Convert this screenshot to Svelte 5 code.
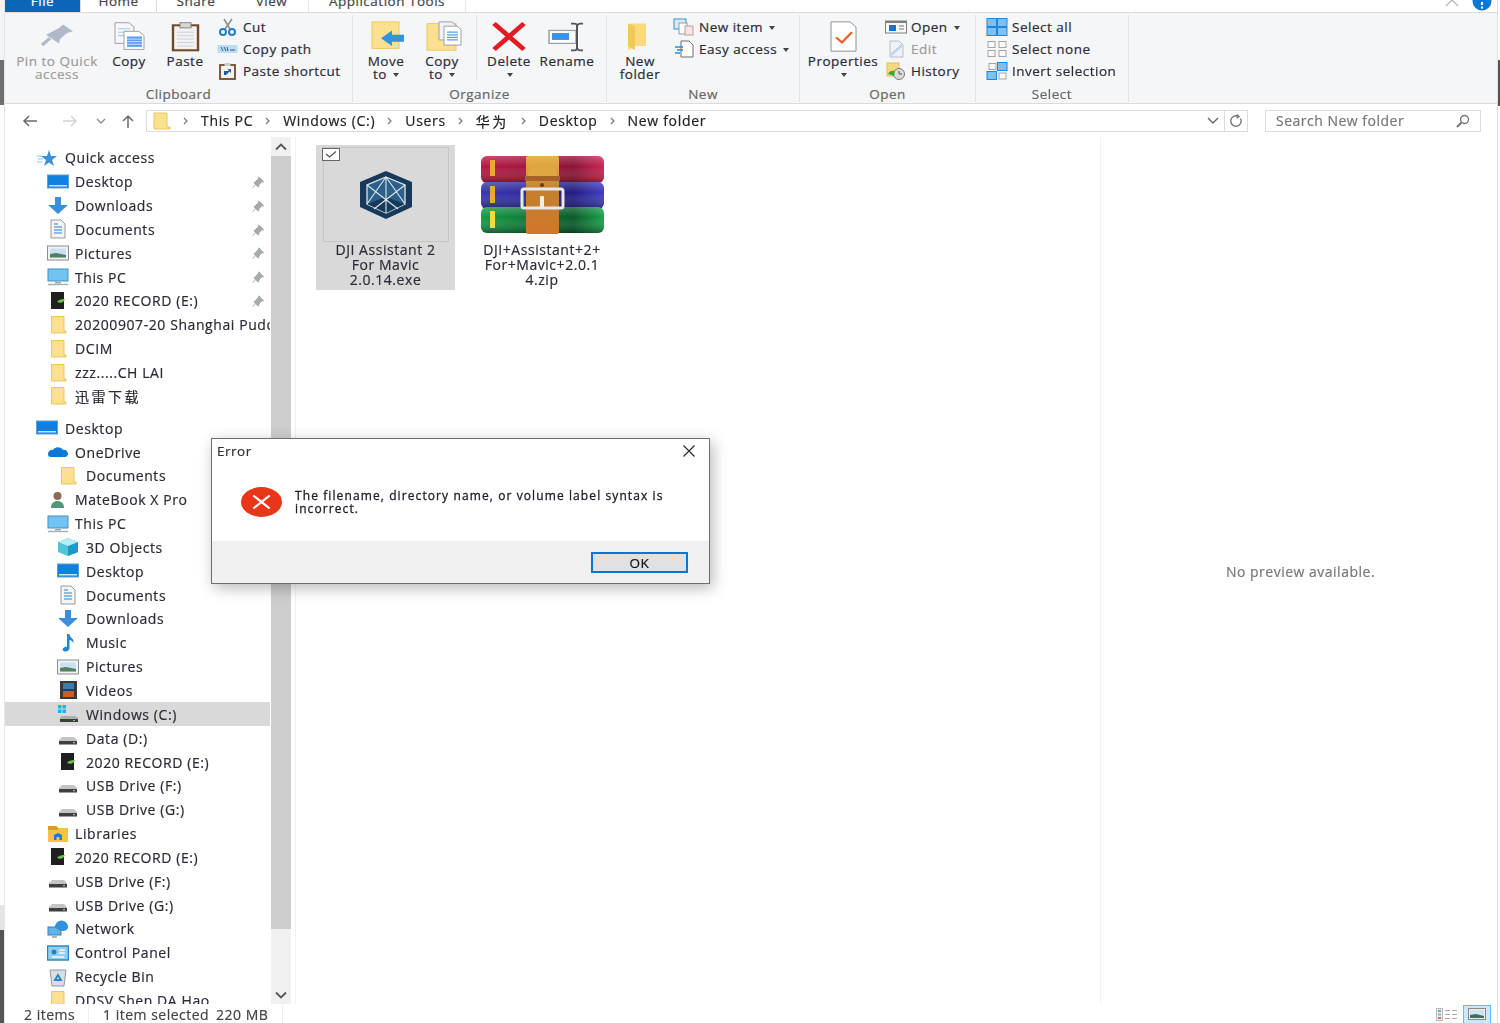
<script>
  const top = [
    { t: 'Quick access', ic: 'star', l: 'l0' },
    { t: 'Desktop', ic: 'desk', l: 'l1', pin: true },
    { t: 'Downloads', ic: 'down', l: 'l1', pin: true },
    { t: 'Documents', ic: 'docs', l: 'l1', pin: true },
    { t: 'Pictures', ic: 'pics', l: 'l1', pin: true },
    { t: 'This PC', ic: 'pc', l: 'l1', pin: true },
    { t: '2020 RECORD (E:)', ic: 'rec', l: 'l1', pin: true },
    { t: '20200907-20 Shanghai Pudong', ic: 'folder', l: 'l1' },
    { t: 'DCIM', ic: 'folder', l: 'l1' },
    { t: 'zzz.....CH LAI', ic: 'folder', l: 'l1' },
    { t: '迅雷下载', ic: 'folder', l: 'l1', cjk: true }
  ];
  const rest = [
    { t: 'Desktop', ic: 'desk', l: 'l0' },
    { t: 'OneDrive', ic: 'cloud', l: 'l1' },
    { t: 'Documents', ic: 'folder', l: 'l2' },
    { t: 'MateBook X Pro', ic: 'user', l: 'l1' },
    { t: 'This PC', ic: 'pc', l: 'l1' },
    { t: '3D Objects', ic: 'cube', l: 'l2' },
    { t: 'Desktop', ic: 'desk', l: 'l2' },
    { t: 'Documents', ic: 'docs', l: 'l2' },
    { t: 'Downloads', ic: 'down', l: 'l2' },
    { t: 'Music', ic: 'music', l: 'l2' },
    { t: 'Pictures', ic: 'pics', l: 'l2' },
    { t: 'Videos', ic: 'video', l: 'l2' },
    { t: 'Windows (C:)', ic: 'win', l: 'l2', sel: true },
    { t: 'Data (D:)', ic: 'drive', l: 'l2' },
    { t: '2020 RECORD (E:)', ic: 'rec', l: 'l2' },
    { t: 'USB Drive (F:)', ic: 'drive', l: 'l2' },
    { t: 'USB Drive (G:)', ic: 'drive', l: 'l2' },
    { t: 'Libraries', ic: 'lib', l: 'l1' },
    { t: '2020 RECORD (E:)', ic: 'rec', l: 'l1' },
    { t: 'USB Drive (F:)', ic: 'drive', l: 'l1' },
    { t: 'USB Drive (G:)', ic: 'drive', l: 'l1' },
    { t: 'Network', ic: 'net', l: 'l1' },
    { t: 'Control Panel', ic: 'panel', l: 'l1' },
    { t: 'Recycle Bin', ic: 'bin', l: 'l1' },
    { t: 'DDSV Shen DA Hao', ic: 'folder', l: 'l1' }
  ];
  const crumbs = ['This PC', 'Windows (C:)', 'Users', '华为', 'Desktop', 'New folder'];
</script>

{#snippet pinIcon(color)}
  <svg class="pin" viewBox="0 0 16 16"><path d="M9 1 L15 7 L12.5 7.5 L9 11 L9 13.5 L7.5 13 L3 8.5 L4.5 7 L8 4 Z M5 10.5 L1.5 14.5" fill={color} stroke={color} stroke-width="1.2"/></svg>
{/snippet}

{#snippet tree(n)}
  <svg class="ti" viewBox="0 0 22 20">
    {#if n === 'star'}
      <path d="M13 2 L15 8 L21 8 L16 12 L18 18 L13 14.5 L8 18 L10 12 L5 8 L11 8 Z" fill="#3a8fdc"/><path d="M1 8h5M2 11h5M1 14h5" stroke="#8cc4f0" stroke-width="1"/>
    {:else if n === 'desk'}
      <rect x="0.5" y="3" width="21" height="13" fill="#0f80e0" stroke="#5f9fd0"/><rect x="2" y="13" width="18" height="1.5" fill="#c7e4f9"/>
    {:else if n === 'down'}
      <path d="M8 1h6v8h7l-10 9L1 9h7z" fill="#3c8fdc"/>
    {:else if n === 'docs'}
      <path d="M4 1h10l4 4v14H4z" fill="#f4f4f4" stroke="#9a9a9a"/><path d="M7 5h4M7 8h8M7 11h8M7 14h8" stroke="#6ca6de" stroke-width="1.3"/>
    {:else if n === 'pics'}
      <rect x="0.5" y="3" width="21" height="14" fill="#f2f2f2" stroke="#8e8e8e"/><rect x="3" y="5.5" width="16" height="9" fill="#c9e1f2"/><path d="M3 11l6-1 10 2v2.5H3z" fill="#527f5f"/>
    {:else if n === 'pc'}
      <rect x="1" y="2" width="20" height="12" fill="#6fc4f2" stroke="#4a8fbe"/><path d="M8 15h6v1.5H8z" fill="#9aa7b0"/><path d="M1 17.5h20" stroke="#9fb0bb" stroke-width="1.4"/>
    {:else if n === 'rec'}
      <rect x="4" y="1" width="13" height="17" fill="#1f1f1f"/><path d="M10 11c2-3 6-3 8-3-1 3-4 5-8 3z" fill="#6cc24a"/>
    {:else if n === 'folder'}
      <path d="M4.5 1.5h12.5v14.5h2v2H4.5z" fill="#fbe08d" stroke="#ecc662"/>
    {:else if n === 'cloud'}
      <path d="M1 12a4 4 0 0 1 5-4 6 6 0 0 1 10 0 4 4 0 0 1 5 4c0 2-2 3-3 3H4c-2 0-3-1-3-3z" fill="#0f78d4"/>
    {:else if n === 'user'}
      <circle cx="10.5" cy="6" r="4" fill="#8a6a52"/><path d="M4 18c0-5 3-7 6.500-7s6.500 2 6.500 7z" fill="#4e9a78"/>
    {:else if n === 'cube'}
      <path d="M11 1l10 4v10l-10 4L1 15V5z" fill="#4dc4d8"/><path d="M11 9l10-4v10l-10 4z" fill="#1a9ac4"/><path d="M1 5l10-4 10 4-10 4z" fill="#b5eef2"/>
    {:else if n === 'music'}
      <path d="M10 1h2.500c0 4 5 4 4 9-1-2-3-3-4-3v8c0 2-2 3.500-4 3.500S5 17 6 15.500 9 13.500 10 14z" fill="#1f86e0"/>
    {:else if n === 'video'}
      <rect x="3" y="1" width="17" height="18" fill="#3a3a3a"/><rect x="6" y="3" width="11" height="6" fill="#3b77c4"/><rect x="6" y="11" width="11" height="6" fill="#c85e2a"/>
    {:else if n === 'win'}
      <rect x="1" y="1" width="3.500" height="3.500" fill="#19b4f0"/><rect x="5.500" y="1" width="3.500" height="3.500" fill="#19b4f0"/><rect x="1" y="5.500" width="3.500" height="3.500" fill="#19b4f0"/><rect x="5.500" y="5.500" width="3.500" height="3.500" fill="#19b4f0"/>
      <path d="M4 12h14l3 2v3H3v-3z" fill="#aeaeae"/><rect x="3" y="15" width="18" height="3" fill="#3d3d3d"/><rect x="16" y="16" width="2" height="1" fill="#6fd06f"/>
    {:else if n === 'drive'}
      <path d="M5 9h12l3 3v3H2v-3z" fill="#c4c4c4"/><rect x="2" y="13" width="18" height="3.500" fill="#3f3f3f"/><rect x="16" y="14" width="2" height="1.200" fill="#7ed47e"/>
    {:else if n === 'lib'}
      <path d="M1 2h8l2 2h10v14H1z" fill="#f5c242"/><path d="M1 2h8l2 2v2H1z" fill="#d99c2a"/><path d="M7 16v-5l4-2 4 2v5h-2.500v-3h-3v3z" fill="#1f78d1"/>
    {:else if n === 'net'}
      <rect x="1" y="8" width="13" height="8" fill="#5fb3e8" stroke="#3f7fae"/><path d="M5 18h5" stroke="#8ea0ab" stroke-width="1.500"/><path d="M8 8a6 6 0 0 1 13 0c0 3-3 4-6 4-3-1-6-2-7-4z" fill="#2e93db"/>
    {:else if n === 'panel'}
      <rect x="0.500" y="3" width="21" height="14" fill="#8fd0f2" stroke="#2f7fb8" stroke-width="1.400"/><circle cx="7" cy="9" r="2.500" fill="#2f7fb8"/><path d="M12 7h6M12 10h6M5 14h12" stroke="#f4f4f4" stroke-width="1.400"/>
    {:else if n === 'bin'}
      <path d="M3 3h16l-2 16H5z" fill="#d8dee2" stroke="#8f9aa2"/><path d="M8 13l3-5 3 5z" fill="none" stroke="#2b7fd0" stroke-width="1.800"/>
    {/if}
  </svg>
{/snippet}

{#snippet big(n)}
  <svg class="bi" viewBox="0 0 40 36" preserveAspectRatio="none">
    {#if n === 'pin'}
      <path d="M26 4l10 8-6 2-7 7-1 5-13-10 5-3 8-5z" fill="#aeb9c9"/><path d="M13 20l-8 8" stroke="#aeb9c9" stroke-width="3.500"/>
    {:else if n === 'copy'}
      <path d="M6 2h14l5 5v19H6z" fill="#f5f7fb" stroke="#9b9b9b"/><path d="M9 9h12M9 13h12M9 17h12" stroke="#a8c6f0" stroke-width="1.300"/>
      <path d="M15 12h15l5 5v16H15z" fill="#fff" stroke="#9b9b9b"/><rect x="18" y="18" width="15" height="12" fill="#5b9bf0"/><path d="M18 21h15M18 24h15M18 27h15" stroke="#d6e6fb"/>
    {:else if n === 'paste'}
      <rect x="8" y="5" width="25" height="29" fill="#f5f2ee" stroke="#6f4a2e" stroke-width="2.400"/><rect x="15" y="2" width="11" height="6" fill="#d8d8d8" stroke="#7a7a7a"/><path d="M12 13h17M12 17h17M12 21h17M12 25h17M12 29h17" stroke="#c2d0e6"/>
    {:else if n === 'move'}
      <rect x="6" y="1" width="27" height="31" fill="#fbe08d" stroke="#ecc662"/><path d="M15 20l11-9v5h12v8H26v5z" fill="#2f95e0"/>
    {:else if n === 'copyto'}
      <rect x="5" y="3" width="29" height="31" fill="#fbe08d" stroke="#ecc662"/><path d="M17 1h13l4 4v17H17z" fill="#eef3fa" stroke="#9b9b9b"/><path d="M22 6h13l4 4v18H22z" fill="#fff" stroke="#9b9b9b"/><path d="M25 13h11M25 16h11M25 19h11M25 22h11" stroke="#5b9bf0" stroke-width="1.500"/>
    {:else if n === 'del'}
      <path d="M5 3l30 30M35 3L5 33" stroke="#e21a22" stroke-width="5"/>
    {:else if n === 'rename'}
      <rect x="2" y="11" width="27" height="15" fill="#fff" stroke="#9ba3a8" stroke-width="1.500"/><rect x="5" y="14" width="17" height="8" fill="#3a92e6"/><path d="M24 3h3c2 0 3 1 3 2s1-2 3-2h3M30 5v27M24 34h3c2 0 3-1 3-2s1 2 3 2h3" fill="none" stroke="#555" stroke-width="2"/>
    {:else if n === 'newf'}
      <path d="M8 3l18 0v26l-11 0-7 5z" fill="#fbd97f"/><path d="M8 3l7 3v28l-7-5z" fill="#f3c85a"/>
    {:else if n === 'prop'}
      <path d="M8 1h19l6 6v28H8z" fill="#fff" stroke="#8a8a8a"/><path d="M13 19l6 6 10-12" fill="none" stroke="#e8622a" stroke-width="2.400"/>
    {/if}
  </svg>
{/snippet}

{#snippet small(n)}
  <svg class="si" viewBox="0 0 22 18">
    {#if n === 'cut'}
      <path d="M7 1l6 10M15 1L8 11" stroke="#8f8f8f" stroke-width="1.600"/><circle cx="6" cy="14" r="3" fill="none" stroke="#1f7fc8" stroke-width="2"/><circle cx="15" cy="14" r="3" fill="none" stroke="#1f7fc8" stroke-width="2"/>
    {:else if n === 'path'}
      <rect x="0.500" y="5" width="20" height="8" fill="#bcdcf4"/><path d="M4 7l2 4M7 7l2 4M10 7l1 4M13 10h5" stroke="#33586f" stroke-width="1"/>
    {:else if n === 'short'}
      <rect x="3" y="3" width="15" height="14" fill="#f4f1ec" stroke="#6f4a2e" stroke-width="1.800"/><rect x="7.500" y="1" width="6" height="3" fill="#ccc"/><path d="M7 13V9h5l-1.500-1.500L14 7v4l-1.500-1.500L9 13z" fill="#1c5a9e"/>
    {:else if n === 'newitem'}
      <rect x="1" y="1" width="12" height="10" fill="#d6eafa" stroke="#3b8fce"/><rect x="6" y="5" width="8" height="11" fill="#fff" stroke="#9a9a9a"/><rect x="12" y="8" width="8" height="9" fill="#fbe3e3" stroke="#b9a0a0"/>
    {:else if n === 'easy'}
      <path d="M8 1h8l4 4v12H8z" fill="#fff" stroke="#6d6d6d"/><path d="M2 7h8M4 10h6M2 13h5" stroke="#2d86d8" stroke-width="1.500"/>
    {:else if n === 'open'}
      <rect x="0.500" y="3" width="21" height="12" fill="#f8f8f8" stroke="#7d7d7d"/><rect x="0.500" y="3" width="21" height="2" fill="#7d7d7d"/><rect x="4" y="7" width="7" height="6" fill="#1f6fd0"/><path d="M14 8h5M14 11h5" stroke="#777"/>
    {:else if n === 'edit'}
      <path d="M5 1h9l4 4v12H5z" fill="#eef3fa" stroke="#b4bec9"/><path d="M6 15L17 5" stroke="#bcd2ea" stroke-width="2.400"/>
    {:else if n === 'hist'}
      <rect x="2" y="1" width="12" height="13" fill="#fbd97f" stroke="#e8bd4e"/><circle cx="14" cy="12" r="5.500" fill="#dcdcdc" stroke="#777"/><path d="M14 9v3h3" fill="none" stroke="#555"/><path d="M3 12a6 6 0 0 1 7-3l-1 5z" fill="#3aa53a"/>
    {:else if n === 'all'}
      <g fill="#7cc0f5" stroke="#1f87dc"><rect x="1" y="0.500" width="9.500" height="8"/><rect x="11.500" y="0.500" width="9.500" height="8"/><rect x="1" y="9.500" width="9.500" height="8"/><rect x="11.500" y="9.500" width="9.500" height="8"/></g>
    {:else if n === 'none'}
      <g fill="#fafafa" stroke="#a5a5a5"><rect x="2" y="1.500" width="7" height="6"/><rect x="13" y="1.500" width="7" height="6"/><rect x="2" y="10.500" width="7" height="6"/><rect x="13" y="10.500" width="7" height="6"/></g>
    {:else if n === 'inv'}
      <g fill="#fafafa" stroke="#a5a5a5"><rect x="3" y="1.500" width="7" height="6"/><rect x="13" y="11" width="7" height="6"/></g><g fill="#7cc0f5" stroke="#1f87dc"><rect x="11.500" y="0.500" width="9.500" height="8"/><rect x="1" y="9.500" width="9.500" height="8"/></g>
    {/if}
  </svg>
{/snippet}

{#snippet row(r)}
  <div class="row {r.l}" class:sel={r.sel}>
    {@render tree(r.ic)}
    <span class="lbl" class:cjk={r.cjk}>{r.t}</span>
    {#if r.pin}{@render pinIcon('#a3abb0')}{/if}
  </div>
{/snippet}

<div class="screen">
  <div class="edge left"></div>
  <div class="win">
    <div class="tabs">
      <div class="tab file">File</div>
      <div class="tab home">Home</div>
      <div class="tab share">Share</div>
      <div class="tab view">View</div>
      <div class="tab app">Application Tools</div>
      <div class="wintools">
        <svg class="chevup" viewBox="0 0 14 6"><path d="M1 6l6-6 6 6" fill="none" stroke="#b5b5b5" stroke-width="1.300"/></svg>
        <svg class="help" viewBox="0 0 20 11"><circle cx="10" cy="1" r="9.500" fill="#0f78d4"/><rect x="9" y="2" width="2" height="3" fill="#fff"/><rect x="9" y="6.500" width="2" height="2" fill="#fff"/></svg>
      </div>
    </div>

    <div class="ribbon">
      <section class="group clip">
        <div class="gbody">
          <div class="big w92 dim">{@render big('pin')}<span>Pin to Quick<br />access</span></div>
          <div class="big w52">{@render big('copy')}<span>Copy</span></div>
          <div class="big w60">{@render big('paste')}<span>Paste</span></div>
          <div class="col c1">
            <div class="sm">{@render small('cut')}<span>Cut</span></div>
            <div class="sm">{@render small('path')}<span>Copy path</span></div>
            <div class="sm">{@render small('short')}<span>Paste shortcut</span></div>
          </div>
        </div>
        <div class="glabel">Clipboard</div>
      </section>
      <section class="group org">
        <div class="gbody">
          <div class="big w56 first">{@render big('move')}<span>Move<br />to <i class="caret"></i></span></div>
          <div class="big w56 sep">{@render big('copyto')}<span>Copy<br />to <i class="caret"></i></span></div>
          <div class="big del">{@render big('del')}<span>Delete<br /><i class="caret"></i></span></div>
          <div class="big w52">{@render big('rename')}<span>Rename</span></div>
        </div>
        <div class="glabel">Organize</div>
      </section>
      <section class="group new">
        <div class="gbody">
          <div class="big w56 nf">{@render big('newf')}<span>New<br />folder</span></div>
          <div class="col c2">
            <div class="sm">{@render small('newitem')}<span>New item <i class="caret"></i></span></div>
            <div class="sm">{@render small('easy')}<span>Easy access <i class="caret"></i></span></div>
          </div>
        </div>
        <div class="glabel">New</div>
      </section>
      <section class="group open">
        <div class="gbody">
          <div class="big w72 pr">{@render big('prop')}<span>Properties<br /><i class="caret"></i></span></div>
          <div class="col c3">
            <div class="sm">{@render small('open')}<span>Open <i class="caret"></i></span></div>
            <div class="sm dim">{@render small('edit')}<span>Edit</span></div>
            <div class="sm">{@render small('hist')}<span>History</span></div>
          </div>
        </div>
        <div class="glabel">Open</div>
      </section>
      <section class="group sel-g">
        <div class="gbody">
          <div class="col c4">
            <div class="sm">{@render small('all')}<span>Select all</span></div>
            <div class="sm">{@render small('none')}<span>Select none</span></div>
            <div class="sm">{@render small('inv')}<span>Invert selection</span></div>
          </div>
        </div>
        <div class="glabel">Select</div>
      </section>
    </div>

    <div class="addr">
      <svg class="nav n1" viewBox="0 0 16 14"><path d="M15 7H2M7 2L2 7l5 5" fill="none" stroke="#6a6a6a" stroke-width="1.500"/></svg>
      <svg class="nav n2" viewBox="0 0 16 14"><path d="M1 7h13M9 2l5 5-5 5" fill="none" stroke="#d4d4d4" stroke-width="1.500"/></svg>
      <svg class="nav n3" viewBox="0 0 10 6"><path d="M1 1l4 4 4-4" fill="none" stroke="#8a8a8a" stroke-width="1.300"/></svg>
      <svg class="nav n4" viewBox="0 0 16 14"><path d="M8 14V2M3 7l5-5 5 5" fill="none" stroke="#6a6a6a" stroke-width="1.500"/></svg>
      <div class="path">
        <svg class="pf" viewBox="0 0 18 18"><path d="M1 1h13v14h3v2H1z" fill="#fbe08d" stroke="#ecc662"/></svg>
        {#each crumbs as c}
          <svg class="cv" viewBox="0 0 6 8"><path d="M1 1l3 3-3 3" fill="none" stroke="#777" stroke-width="1.200"/></svg>
          <span class:cjk={c === '华为'}>{c}</span>
        {/each}
        <svg class="dd" viewBox="0 0 12 7"><path d="M1 1l5 5 5-5" fill="none" stroke="#666" stroke-width="1.400"/></svg>
        <div class="refresh"><svg viewBox="0 0 14 14"><path d="M11.500 4.500a5.200 5.200 0 1 1-2-2M8 0.500l2 2.200-2.500 1.500" fill="none" stroke="#777" stroke-width="1.400"/></svg></div>
      </div>
      <div class="search">
        <span>Search New folder</span>
        <svg viewBox="0 0 14 14"><circle cx="8.500" cy="5.500" r="4" fill="none" stroke="#777" stroke-width="1.400"/><path d="M5.500 8.500L1 13" stroke="#777" stroke-width="2"/></svg>
      </div>
    </div>

    <div class="main">
      <nav class="side">
        {#each top as r}{@render row(r)}{/each}
        <div class="spacer"></div>
        {#each rest as r}{@render row(r)}{/each}
      </nav>
      <div class="bar">
        <svg viewBox="0 0 12 8"><path d="M1 6.500l5-5 5 5" fill="none" stroke="#555" stroke-width="1.800"/></svg>
        <div class="thumb"></div>
        <div class="rest"></div>
        <svg viewBox="0 0 12 8"><path d="M1 1.500l5 5 5-5" fill="none" stroke="#555" stroke-width="1.800"/></svg>
      </div>
      <div class="content">
        <div class="tile selected">
          <div class="frame">
            <svg class="check" viewBox="0 0 18 13"><rect x="0.500" y="0.500" width="17" height="12" fill="#fff" stroke="#666"/><path d="M4 6l3.500 3L14 3.500" fill="none" stroke="#555" stroke-width="1.200"/></svg>
            <svg class="hex" viewBox="0 0 56 48">
              <path d="M28 0L54 11V36L28 48L2 36V11Z" fill="#17395a"/>
              <path d="M28 6L47 14V33L28 42L9 33V14Z" fill="#2c6088" stroke="#dbe6ee" stroke-width="1.300"/>
              <path d="M28 26V42L9 33z" fill="#17395a"/><path d="M28 26V42L47 33z" fill="#17395a"/>
              <path d="M28 6V42M28 6L9 33M28 6L47 33M9 14L40 38M47 14L16 38" fill="none" stroke="#dbe6ee" stroke-width="1.100"/>
            </svg>
          </div>
          <div class="name">DJI Assistant 2<br />For Mavic<br />2.0.14.exe</div>
        </div>
        <div class="tile">
          <div class="frame plain">
            <svg class="zip" viewBox="0 0 123 78">
              <defs>
                <linearGradient id="gr" x1="0" x2="1" y1="0" y2="0"><stop offset="0" stop-color="#b81a44"/><stop offset=".75" stop-color="#8c1236"/><stop offset="1" stop-color="#c92552"/></linearGradient>
                <linearGradient id="gb" x1="0" x2="1" y1="0" y2="0"><stop offset="0" stop-color="#3a35b0"/><stop offset=".75" stop-color="#211b80"/><stop offset="1" stop-color="#413cc0"/></linearGradient>
                <linearGradient id="gg" x1="0" x2="1" y1="0" y2="0"><stop offset="0" stop-color="#149a46"/><stop offset=".75" stop-color="#075a28"/><stop offset="1" stop-color="#18a24b"/></linearGradient>
                <linearGradient id="go" x1="0" x2="0" y1="0" y2="1"><stop offset="0" stop-color="#e8b24a"/><stop offset=".45" stop-color="#c4802e"/><stop offset="1" stop-color="#d2762a"/></linearGradient>
                <linearGradient id="sh" x1="0" x2="0" y1="0" y2="1"><stop offset="0" stop-color="#fff" stop-opacity=".22"/><stop offset=".4" stop-color="#fff" stop-opacity="0"/><stop offset="1" stop-color="#000" stop-opacity=".35"/></linearGradient>
              </defs>
              <rect x="0" y="0" width="123" height="27" rx="6" fill="url(#gr)"/>
              <rect x="0" y="0" width="123" height="27" rx="6" fill="url(#sh)"/>
              <rect x="0" y="26" width="123" height="27" rx="6" fill="url(#gb)"/>
              <rect x="0" y="26" width="123" height="27" rx="6" fill="url(#sh)"/>
              <rect x="0" y="51" width="123" height="26" rx="6" fill="url(#gg)"/>
              <rect x="0" y="51" width="123" height="26" rx="6" fill="url(#sh)"/>
              <rect x="9" y="4" width="5" height="16" fill="#e8a838"/><rect x="9" y="30" width="5" height="17" fill="#e8a838"/><rect x="9" y="55" width="5" height="17" fill="#f2dc3a"/>
              <rect x="45" y="0" width="33" height="78" rx="2" fill="url(#go)"/>
              <path d="M47 18C47 6 76 6 76 18V22H47Z" fill="#dfa644"/>
              <rect x="44" y="20" width="35" height="5" fill="#a4622a"/>
              <circle cx="61" cy="29" r="2" fill="#6a3a12"/>
              <rect x="41" y="33" width="41" height="19" rx="2" fill="none" stroke="#e8e8e8" stroke-width="3"/>
              <rect x="59" y="40" width="4" height="11" rx="1" fill="#eee"/>
            </svg>
          </div>
          <div class="name">DJI+Assistant+2+<br />For+Mavic+2.0.1<br />4.zip</div>
        </div>
      </div>
      <aside class="preview">No preview available.</aside>
    </div>

    <footer class="status">
      <span class="s1">2 items</span>
      <span class="s2">1 item selected</span>
      <span class="s3">220 MB</span>
      <div class="views">
        <svg class="vd" viewBox="0 0 22 13"><rect x="0.500" y="0.500" width="6" height="12" fill="#eee" stroke="#bbb"/><path d="M9 2.500h5M16 2.500h5M9 6.500h5M16 6.500h5M9 10.500h5M16 10.500h5" stroke="#aaa"/><rect x="2" y="2" width="3" height="2" fill="#7ab"/><rect x="2" y="5.500" width="3" height="2" fill="#7bd"/><rect x="2" y="9" width="3" height="2" fill="#e66"/></svg>
        <div class="vt"><svg viewBox="0 0 18 12"><rect x="0.500" y="0.500" width="17" height="11" fill="#eee" stroke="#888"/><rect x="2" y="2" width="14" height="8" fill="#cfe4f2"/><path d="M2 7l6-1 8 2v2H2z" fill="#3f6f5f"/></svg></div>
      </div>
    </footer>
  </div>
  <div class="edge right"></div>

  <div class="dialog">
    <div class="dtitle">
      <span>Error</span>
      <svg viewBox="0 0 12 12"><path d="M0.500 0.500l11 11M11.500 0.500l-11 11" stroke="#222" stroke-width="1.100"/></svg>
    </div>
    <div class="dbody">
      <svg viewBox="0 0 40 30" preserveAspectRatio="none"><ellipse cx="20" cy="15" rx="20" ry="15" fill="#e8361a"/><path d="M12 8.500l16 13M28 8.500l-16 13" stroke="#fff" stroke-width="2.200"/></svg>
      <p>The filename, directory name, or volume label syntax is incorrect.</p>
    </div>
    <div class="dfoot"><button>OK</button></div>
  </div>
</div>

<style>
  :global(body) { margin: 0; background: #fff; }
  .screen {
    position: relative; width: 1500px; height: 1023px; display: flex; overflow: hidden;
    font-family: "Open Sans", "Noto Sans CJK SC", sans-serif; font-size: 13.5px; letter-spacing: .5px;
    color: #2b2b38; filter: blur(.4px); -webkit-text-stroke: .2px currentColor;
  }
  .edge { flex: none; }
  .edge.left { width: 4px; border-right: 1px solid #e6e6e6; background: linear-gradient(#f4f4f4 0 60px, #6f6f6f 60px 105px, #fff 105px 905px, #e4e4e4 905px 930px, #555 930px); }
  .edge.right { width: 2px; border-left: 1px solid #e0e0e0; background: linear-gradient(#fff 0 60px, #555 60px 106px, #fff 106px); }
  .win { flex: 1; min-width: 0; display: flex; flex-direction: column; }

  .tabs { height: 12px; flex: none; display: flex; overflow: hidden; background: #fff; border-bottom: 1px solid #dadbdc; }
  .tab { flex: none; text-align: center; line-height: 2px; box-sizing: border-box; color: #444; }
  .file { width: 75px; background: #0b66b8; color: #fff; }
  .home { width: 77px; border-left: 1px solid #dadbdc; border-right: 1px solid #dadbdc; }
  .share { width: 78px; }
  .view { width: 74px; border-right: 1px solid #e8e8e8; }
  .app { width: 157px; border-right: 1px solid #e8e8e8; }
  .wintools { margin-left: auto; display: flex; align-items: flex-start; padding-right: 5px; }
  .chevup { width: 14px; height: 6px; margin-right: 13px; }
  .help { width: 20px; height: 11px; }

  .ribbon { height: 91px; flex: none; box-sizing: border-box; padding-top: 2px; display: flex; background: #f5f6f7; border-bottom: 1px solid #dadbdc; }
  .group { box-sizing: border-box; border-right: 1px solid #e2e3e4; height: 87px; display: flex; flex-direction: column; flex: none; }
  .clip { width: 348px; }
  .clip .gbody { padding-left: 6px; }
  .org { width: 254px; }
  .new { width: 193px; }
  .open { width: 176px; }
  .sel-g { width: 153px; }
  .gbody { height: 71px; display: flex; align-items: flex-start; }
  .glabel { height: 16px; line-height: 16px; text-align: center; color: #666; }
  .big { flex: none; display: flex; flex-direction: column; align-items: center; text-align: center; line-height: 13px; box-sizing: border-box; }
  .big span { display: block; white-space: nowrap; }
  .bi { width: 40px; height: 31px; margin: 6px 0 2.500px; flex: none; }
  .w92 { width: 92px; } .w52 { width: 52px; } .w60 { width: 60px; } .w56 { width: 56px; } .w72 { width: 72px; }
  .dim { color: #9b9b9b; }
  .first { margin-left: 5px; }
  .sep { width: 63px; padding-right: 6px; border-right: 1px solid #e2e3e4; height: 66px; }
  .del { width: 64px; }
  .nf { margin-left: 5px; }
  .pr { margin-left: 7px; }
  .col { display: flex; flex-direction: column; padding-top: 1px; }
  .c1 { margin-left: 2px; } .c2 { margin-left: 5px; } .c3 { margin-left: 6px; } .c4 { margin-left: 10px; }
  .sm { display: flex; align-items: center; height: 22px; white-space: nowrap; gap: 4px; }
  .si { width: 22px; height: 18px; flex: none; }
  .caret { display: inline-block; width: 0; height: 0; border: 3.500px solid transparent; border-top: 4px solid #444; border-bottom: 0; vertical-align: 2px; margin-left: 2px; }

  .addr { height: 33px; flex: none; box-sizing: border-box; display: flex; align-items: center; background: #fff; position: relative; }
  .nav { flex: none; }
  .n1 { width: 16px; height: 14px; margin-left: 17px; }
  .n2 { width: 16px; height: 14px; margin-left: 24px; }
  .n3 { width: 10px; height: 6px; margin-left: 18px; }
  .n4 { width: 16px; height: 14px; margin-left: 14px; }
  .path { margin-left: 10px; width: 1102px; height: 22px; flex: none; box-sizing: border-box; border: 1px solid #dcdcdc; display: flex; align-items: center; gap: 12px; padding-left: 6px; color: #222; font-size: 14px; letter-spacing: .68px; }
  .pf { width: 18px; height: 18px; flex: none; }
  .cv { width: 6px; height: 8px; flex: none; }
  .cjk { letter-spacing: 2.500px; }
  .dd { width: 12px; height: 7px; margin-left: auto; }
  .refresh { width: 22px; height: 20px; border-left: 1px solid #dcdcdc; margin-left: -7px; display: flex; align-items: center; justify-content: center; }
  .refresh svg { width: 14px; height: 14px; }
  .search { margin-left: 17px; width: 216px; height: 22px; box-sizing: border-box; border: 1px solid #dcdcdc; display: flex; align-items: center; justify-content: space-between; padding: 0 10px; color: #777; font-size: 14px; letter-spacing: .5px; }
  .search svg { width: 14px; height: 14px; }

  .main { flex: 1; min-height: 0; display: flex; background: #fff; }
  .side { width: 265px; flex: none; overflow: hidden; box-sizing: border-box; padding-top: 9px; }
  .row { height: 23.850px; display: flex; align-items: center; white-space: nowrap; position: relative; overflow: hidden; font-size: 14px; letter-spacing: .58px; }
  .row.sel { background: #d9d9d9; }
  .l0 { padding-left: 31px; } .l1 { padding-left: 42px; } .l2 { padding-left: 52px; }
  .ti { width: 22px; height: 20px; flex: none; margin-right: 6px; }
  .l0 .ti { margin-right: 7px; }
  .l2 .ti { margin-right: 7px; }
  .pin { position: absolute; left: 246px; top: 6px; width: 14px; height: 13px; }
  .spacer { height: 8px; }
  .bar { width: 20px; flex: none; margin-left: 1px; display: flex; flex-direction: column; align-items: center; background: #f0f0f0; }
  .bar svg { width: 12px; height: 8px; flex: none; margin: 6px 0 5px; }
  .thumb { width: 100%; height: 773px; background: #cdcdcd; flex: none; }
  .rest { flex: 1; }
  .content { width: 805px; margin-left: 4px; flex: none; box-sizing: border-box; border-left: 1px solid #f2f2f2; padding: 8px 0 0 20px; display: flex; gap: 17.500px; align-items: flex-start; }
  .tile { width: 139px; height: 145px; display: flex; flex-direction: column; align-items: center; box-sizing: border-box; padding-top: 2px; }
  .tile.selected { background: #d9d9d9; }
  .frame { width: 126px; height: 95px; box-sizing: border-box; border: 1px solid #c6c6c6; position: relative; display: flex; align-items: center; justify-content: center; }
  .frame.plain { border-color: transparent; }
  .check { position: absolute; left: -2px; top: 0; width: 18px; height: 13px; }
  .hex { width: 56px; height: 48px; }
  .zip { width: 123px; height: 78px; }
  .name { text-align: center; line-height: 15px; margin-top: -0.500px; white-space: nowrap; font-size: 14px; letter-spacing: .55px; }
  .preview { flex: 1; border-left: 1px solid #f2f2f2; display: flex; align-items: center; justify-content: center; color: #777; font-size: 14px; letter-spacing: .5px; padding: 1px 0 0 3px; }

  .status { height: 19px; flex: none; box-sizing: border-box; padding-top: 1px; display: flex; align-items: center; background: #fff; color: #444; position: relative; font-size: 14px; letter-spacing: .5px; }
  .s1 { margin-left: 19px; width: 64px; border-right: 1px solid #eee; }
  .s2 { margin-left: 14px; width: 113px; }
  .s3 { width: 66px; border-right: 1px solid #eee; }
  .views { margin-left: auto; display: flex; align-items: center; gap: 5px; padding-right: 6px; }
  .vd { width: 22px; height: 13px; }
  .vt { width: 28px; height: 19px; box-sizing: border-box; background: #cce8ff; border: 1px solid #5fc0ef; display: flex; align-items: center; justify-content: center; }
  .vt svg { width: 18px; height: 12px; }

  .dialog { position: absolute; left: 211px; top: 438px; width: 499px; height: 146px; box-sizing: border-box; background: #fff; border: 1px solid #6e6e6e; box-shadow: 3px 4px 14px rgba(0,0,0,.28); display: flex; flex-direction: column; color: #111; }
  .dtitle { height: 24px; flex: none; display: flex; align-items: center; justify-content: space-between; padding: 0 14px 0 5px; color: #333; }
  .dtitle svg { width: 12px; height: 12px; }
  .dbody { flex: 1; display: flex; align-items: center; padding-left: 29px; }
  .dbody svg { width: 41px; height: 30px; flex: none; }
  .dbody p { margin: 0 0 0 13px; width: 385px; font-size: 12px; line-height: 13px; letter-spacing: 1.100px; color: #1c1c28; -webkit-text-stroke: .3px currentColor; }
  .dfoot { height: 42px; flex: none; background: #f0f0f0; display: flex; align-items: center; justify-content: flex-end; padding-right: 21px; }
  button { width: 97px; height: 21px; box-sizing: border-box; background: #e1e1e1; border: 2px solid #0078d7; font: inherit; letter-spacing: .5px; color: #111; padding: 0; border-radius: 0; }
</style>
